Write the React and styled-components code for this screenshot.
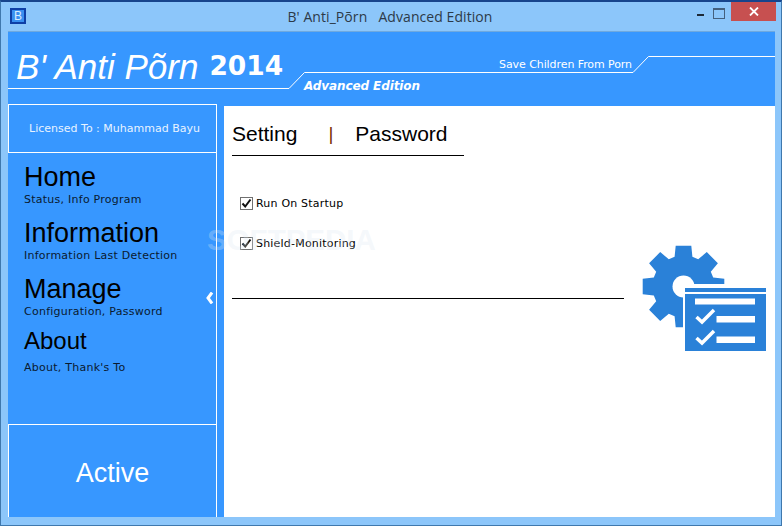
import React from "react";
import styled, { createGlobalStyle } from "styled-components";

const Global = createGlobalStyle`
  html, body { margin: 0; padding: 0; background: #8cc6fa; }
  * { box-sizing: border-box; }
`;

const BLUE = "#3797ff";

const Window = styled.div`
  position: relative;
  width: 782px;
  height: 526px;
  overflow: hidden;
  background: #8cc6fa;
  border: 1px solid #3f78ad;
  border-top: 2px solid #17448c;
  padding: 0 6px 8px 7px;
  display: flex;
  flex-direction: column;
  font-family: "DejaVu Sans", Verdana, sans-serif;
`;

const TitleBar = styled.div`
  position: relative;
  height: 30px;
  flex: none;
  border-bottom: 1px solid #6fa9de;
  display: flex;
  align-items: center;
  justify-content: center;
`;

const AppIcon = styled.div`
  position: absolute;
  left: 2px;
  top: 6px;
  width: 16px;
  height: 16px;
  background: #3a8ff0;
  border: 2px solid #0f3fa6;
  color: #d8ecff;
  font: 12px/12px "Liberation Sans", sans-serif;
  text-align: center;
`;

const Title = styled.div`
  font: 14px/20px "Open Sans", sans-serif;
  letter-spacing: 0.07px;
  color: #2c3a48;
  white-space: pre;
  margin-right: 3px;
`;

const Controls = styled.div`
  position: absolute;
  right: -1px;
  top: 0;
  display: flex;
  align-items: flex-start;
`;

const Minimize = styled.div`
  width: 25px;
  height: 19px;
  display: flex;
  justify-content: center;
  padding-top: 12px;
  &::after { content: ""; width: 7px; height: 2px; background: #1d2a38; }
`;

const Maximize = styled.div`
  width: 18px;
  height: 19px;
  padding-top: 6px;
  &::after { content: ""; display: block; width: 10px; height: 8px; border: 1px solid #44607e; border-top-width: 2px; }
`;

const Close = styled.div`
  width: 45px;
  height: 19px;
  background: #c75050;
  display: flex;
  align-items: center;
  justify-content: center;
`;

const Header = styled.header`
  position: relative;
  height: 74px;
  flex: none;
  background: ${BLUE};
  color: #fff;
  display: flex;
  align-items: flex-start;
`;

const HeaderLines = styled.svg`
  position: absolute;
  left: 0;
  top: 0;
`;

const Brand = styled.div`
  font: italic 35px/40px "Liberation Sans", sans-serif;
  margin: 15px 0 0 8px;
  white-space: nowrap;
`;

const Year = styled.div`
  font: bold 26.5px/32px "DejaVu Sans", sans-serif;
  margin: 18px 0 0 11px;
`;

const Tagline = styled.div`
  position: absolute;
  right: 143px;
  top: 26px;
  font: 11px/14px "DejaVu Sans", sans-serif;
  letter-spacing: -0.08px;
`;

const Edition = styled.div`
  position: absolute;
  left: 296px;
  top: 46px;
  font: italic bold 12px/16px "DejaVu Sans", sans-serif;
  letter-spacing: -0.1px;
`;

const Body = styled.div`
  flex: 1;
  min-height: 0;
  display: flex;
  background: ${BLUE};
`;

const Sidebar = styled.aside`
  position: relative;
  width: 209px;
  margin-top: -2px;
  flex: none;
  display: flex;
  flex-direction: column;
  border-right: 1px solid #fff;
`;

const License = styled.div`
  height: 49px;
  flex: none;
  border: 1px solid #fff;
  border-right: 0;
  color: #e8f3ff;
  font: 11px/14px "DejaVu Sans", sans-serif;
  display: flex;
  align-items: center;
  justify-content: center;
  padding-left: 4px;
`;

const Nav = styled.nav`
  flex: 1;
  padding: 9px 0 0 16px;
`;

const NavItem = styled.div`
  height: 56px;
  color: #000;
`;

const NavTitle = styled.div`
  font: ${(p) => p.$size}px/30px "Liberation Sans", sans-serif;
  height: ${(p) => 31 + p.$lift}px;
  margin-top: ${(p) => -p.$lift}px;
`;

const NavSub = styled.div`
  font: 11px/14px "DejaVu Sans", sans-serif;
  letter-spacing: 0.25px;
  color: #0a1a30;
`;

const Collapse = styled.svg`
  position: absolute;
  left: 198px;
  top: 188px;
`;

const Status = styled.div`
  height: 93px;
  flex: none;
  border-top: 1px solid #fff;
  border-left: 1px solid #fff;
  color: #fff;
  font: 27px/32px "Liberation Sans", sans-serif;
  display: flex;
  align-items: center;
  justify-content: center;
  padding-top: 4px;
`;

const Content = styled.main`
  flex: 1;
  margin-left: 7px;
  background: #fff;
  padding: 14px 0 0 8px;
  position: relative;
`;

const Tabs = styled.div`
  width: 232px;
  height: 36px;
  border-bottom: 1px solid #000;
  display: flex;
  align-items: flex-start;
  font: 21px/28px "Liberation Sans", sans-serif;
  color: #000;
`;

const Tab = styled.span``;

const TabSep = styled.span`
  color: #7a3000;
  font-size: 19px;
  margin: 0 22px 0 31px;
`;

const Options = styled.div`
  display: flex;
  flex-direction: column;
  gap: 26px;
  padding: 41px 0 0 8px;
`;

const Option = styled.label`
  display: flex;
  align-items: center;
  gap: 3px;
  height: 14px;
  font: 11px/14px "DejaVu Sans", sans-serif;
  letter-spacing: 0.2px;
  color: #000;
`;

const Box = styled.span`
  width: 13px;
  height: 13px;
  margin-top: -2px;
  border: 1px solid #707070;
  background: #fff;
  display: flex;
  align-items: center;
  justify-content: center;
`;

const Divider = styled.div`
  width: 392px;
  height: 1px;
  background: #000;
  margin-top: 47px;
`;

const SettingsIcon = styled.svg`
  position: absolute;
  left: 418px;
  top: 139px;
`;

const Watermark = styled.div`
  position: absolute;
  left: 206px;
  top: 220px;
  font: bold 29.5px/36px "Liberation Sans", sans-serif;
  color: rgba(222, 232, 242, 0.3);
  pointer-events: none;
`;

function gearPoints(cx, cy, outer, inner, teeth) {
  const pts = [];
  const step = (Math.PI * 2) / teeth;
  for (let i = 0; i < teeth; i++) {
    const a = i * step - Math.PI / 2;
    const w = 0.19;
    const v = 0.29;
    pts.push([a - v, inner], [a - w, outer], [a + w, outer], [a + v, inner]);
  }
  return pts
    .map(([a, r]) => `${(cx + r * Math.cos(a)).toFixed(1)},${(cy + r * Math.sin(a)).toFixed(1)}`)
    .join(" ");
}

const Check = () => (
  <svg width="11" height="11" viewBox="0 0 11 11">
    <path d="M1.5 5.5 L4.2 8.5 L9.5 1.5" fill="none" stroke="#111" strokeWidth="2" />
  </svg>
);

const items = [
  { t: "Home", s: "Status, Info Program", size: 27, lift: 0 },
  { t: "Information", s: "Information Last Detection", size: 27, lift: 0 },
  { t: "Manage", s: "Configuration, Password", size: 27, lift: 0 },
  { t: "About", s: "About, Thank's To", size: 24, lift: 4 },
];

export default function App() {
  const cx = 41.5, cy = 41.5;
  return (
    <>
      <Global />
      <Window>
        <TitleBar>
          <AppIcon>B</AppIcon>
          <Title>{"B' Anti_Põrn   Advanced Edition"}</Title>
          <Controls>
            <Minimize />
            <Maximize />
            <Close>
              <svg width="10" height="9" viewBox="0 0 10 9">
                <path d="M1 0.5 L9 8.5 M9 0.5 L1 8.5" stroke="#fff" strokeWidth="1.8" />
              </svg>
            </Close>
          </Controls>
        </TitleBar>
        <Header>
          <HeaderLines width="767" height="74" viewBox="0 0 767 74">
            <path d="M0 56.5 H281 L296.5 40.5 H625 L640.5 24.5 H767" fill="none" stroke="#fff" strokeWidth="1" />
          </HeaderLines>
          <Brand>B' Anti Põrn</Brand>
          <Year>2014</Year>
          <Tagline>Save Children From Porn</Tagline>
          <Edition>Advanced Edition</Edition>
        </Header>
        <Body>
          <Sidebar>
            <License>Licensed To : Muhammad Bayu</License>
            <Nav>
              {items.map((i) => (
                <NavItem key={i.t}>
                  <NavTitle $size={i.size} $lift={i.lift}>{i.t}</NavTitle>
                  <NavSub>{i.s}</NavSub>
                </NavItem>
              ))}
            </Nav>
            <Collapse width="8" height="12" viewBox="0 0 8 12">
              <path d="M6 0.5 L2 6 L6 11.5" fill="none" stroke="#fff" strokeWidth="3" />
            </Collapse>
            <Status>Active</Status>
          </Sidebar>
          <Content>
            <Tabs>
              <Tab>Setting</Tab>
              <TabSep>|</TabSep>
              <Tab>Password</Tab>
            </Tabs>
            <Options>
              <Option><Box><Check /></Box>Run On Startup</Option>
              <Option><Box><Check /></Box>Shield-Monitoring</Option>
            </Options>
            <Divider />
            <SettingsIcon width="126" height="110" viewBox="0 0 126 110">
              <polygon points={gearPoints(cx, cy, 41.5, 31, 8)} fill="#2a81d8" />
              <circle cx={cx} cy={cy} r="11" fill="#fff" />
              <rect x="41" y="39" width="85" height="71" fill="#fff" />
              <rect x="43" y="43" width="81" height="4" fill="#2a81d8" />
              <rect x="43" y="49" width="81" height="57" fill="#2a81d8" />
              <rect x="53" y="53.5" width="60" height="6" fill="#fff" />
              <rect x="74.5" y="71" width="38.5" height="6.5" fill="#fff" />
              <rect x="74.5" y="91.5" width="38.5" height="6.5" fill="#fff" />
              <path d="M54.5 72 L60 77 L72 65" fill="none" stroke="#fff" strokeWidth="3.5" />
              <path d="M54.5 93 L60 98 L72 86" fill="none" stroke="#fff" strokeWidth="3.5" />
            </SettingsIcon>
          </Content>
        </Body>
        <Watermark>SOFTPEDIA</Watermark>
      </Window>
    </>
  );
}
